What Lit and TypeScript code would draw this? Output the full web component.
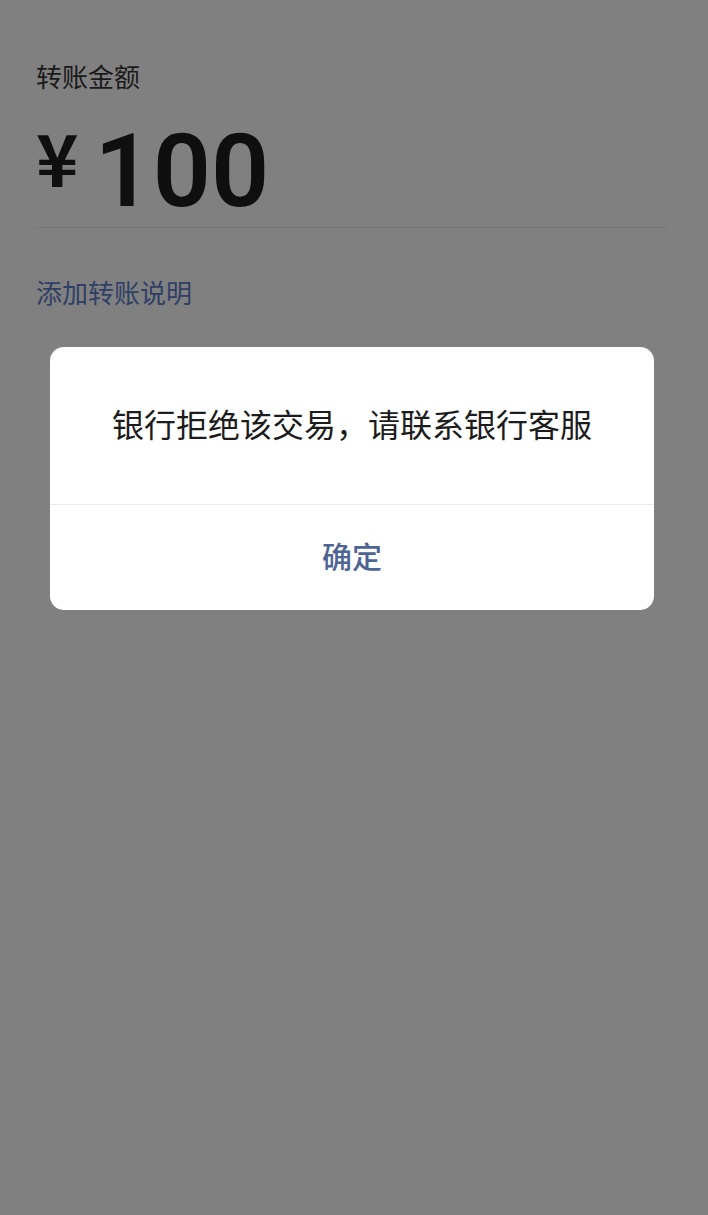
import {LitElement, html, css} from 'lit';
import {customElement, property} from 'lit/decorators.js';

@customElement('transfer-dialog')
export class TransferDialog extends LitElement {
  @property() message = '';
  @property() confirmText = '确定';

  static styles = css`
    :host {
      display: block;
    }

    .dialog {
      border-radius: 14px;
      overflow: hidden;
      background-color: #fff;
      text-align: center;
    }

    .message {
      margin: 0;
      padding: 54px 24px 58px;
      color: #1c1c1c;
      font-size: 32px;
      font-weight: 400;
      line-height: 45px;
    }

    .confirm {
      display: block;
      width: 100%;
      padding: 28px 0 32px;
      border: none;
      border-top: 1px solid #ececec;
      background: none;
      color: #4e6594;
      font-family: inherit;
      font-size: 30px;
      font-weight: 500;
      line-height: 45px;
      cursor: pointer;
    }
  `;

  _handleConfirm() {
    this.dispatchEvent(
      new CustomEvent('confirm', {bubbles: true, composed: true})
    );
  }

  render() {
    return html`
      <div class="dialog" role="alertdialog" aria-modal="true" aria-labelledby="message">
        <p class="message" id="message">${this.message}</p>
        <button class="confirm" type="button" @click="${this._handleConfirm}">
          ${this.confirmText}
        </button>
      </div>
    `;
  }
}

@customElement('app-root')
export class AppRoot extends LitElement {
  @property({type: Number}) amount = 100;

  static styles = css`
    :host {
      display: block;
      font-family: 'Noto Sans CJK SC', sans-serif;
    }

    .page {
      position: relative;
      box-sizing: border-box;
      min-height: 100vh;
      padding: 60px 40px 0 34px;
      background-color: #808080;
    }

    .label {
      margin: 0 0 0 2px;
      color: #1a1a1a;
      font-size: 26px;
      font-weight: 400;
      line-height: 32px;
    }

    .amount {
      display: flex;
      align-items: flex-start;
      gap: 16px;
      padding: 24px 2px 0;
      border-bottom: 1px solid #777;
      color: #0f0f0f;
    }

    .currency {
      font-size: 72px;
      font-weight: 700;
      line-height: 80px;
    }

    .value {
      font-family: Roboto, sans-serif;
      font-size: 102px;
      font-weight: 600;
      line-height: 111px;
    }

    .note {
      display: inline-block;
      margin: 48px 0 0 2px;
      color: #2f3f66;
      font-size: 26px;
      line-height: 32px;
      text-decoration: none;
    }

    .overlay {
      position: absolute;
      inset: 0;
      padding: 347px 54px 0 50px;
    }
  `;

  render() {
    return html`
      <main class="page">
        <p class="label">转账金额</p>
        <div class="amount">
          <span class="currency">¥</span>
          <span class="value">${this.amount}</span>
        </div>
        <a class="note" href="#">添加转账说明</a>
        <div class="overlay">
          <transfer-dialog message="银行拒绝该交易，请联系银行客服"></transfer-dialog>
        </div>
      </main>
    `;
  }
}
